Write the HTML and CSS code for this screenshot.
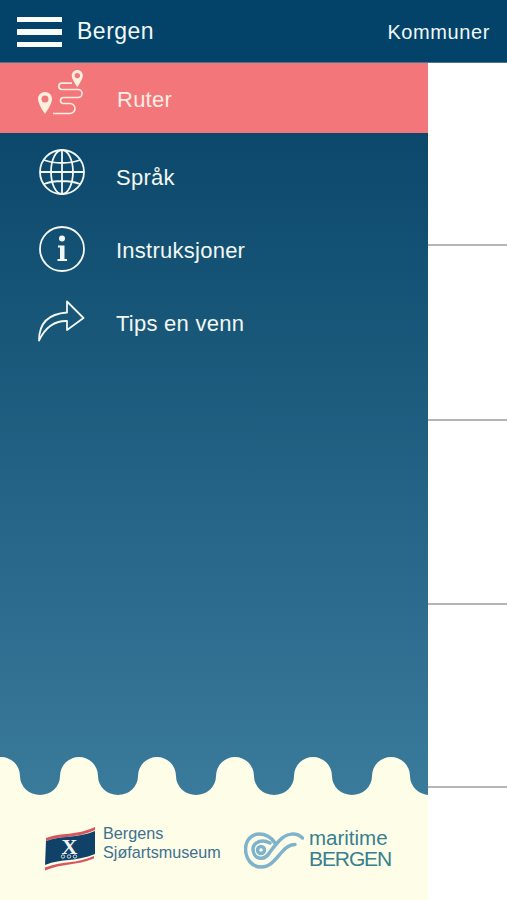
FILE: index.html
```html
<!DOCTYPE html>
<html lang="no">
<head>
<meta charset="utf-8">
<title>Bergen</title>
<link rel="stylesheet" href="styles.css">
</head>
<body>
<div class="app">
  <header class="topbar">
    <div class="burger"><span></span><span></span><span></span></div>
    <div class="title">Bergen</div>
    <div class="kommuner">Kommuner</div>
  </header>
  <div class="main">
    <aside class="drawer">
      <a class="active-row">
        <svg class="icon-route" viewBox="0 0 50 50" width="50" height="50">
          <path class="pin" fill-rule="evenodd" d="M9 24c-4 0-7 3-7 7C2 36 9 46 9 46s7-10 7-15C16 27 13 24 9 24zm0 3.500a3.500 3.500 0 1 1 0 7 3.500 3.500 0 0 1 0-7z"/>
          <path class="pin" fill-rule="evenodd" d="M41.300 2c-3.100 0-5.600 2.500-5.600 5.600 0 3.800 5.600 11.600 5.600 11.600s5.600-7.800 5.600-11.600c0-3.100-2.500-5.600-5.600-5.600zm0 2.900a2.700 2.700 0 1 1 0 5.400 2.700 2.700 0 0 1 0-5.400z"/>
          <path class="route" d="M17 45.500H34a5 5 0 0 0 0-10H27.500a3 3 0 0 1 0-6H42a4 4 0 0 0 0-8H26a3.200 3.200 0 0 1 0-6.400H36"/>
        </svg>
        <span class="label">Ruter</span>
      </a>
      <div class="drawer-body">
        <nav class="nav">
          <a class="row">
            <svg class="icon icon-globe" viewBox="0 0 48 48" width="48" height="48">
              <g class="line">
                <circle cx="24" cy="24" r="22"/>
                <ellipse cx="24" cy="24" rx="11" ry="22"/>
                <path d="M24 2V46M2 24H46M6 12C16 16 32 16 42 12M6 36C16 32 32 32 42 36"/>
              </g>
            </svg>
            <span class="label">Språk</span>
          </a>
          <a class="row">
            <svg class="icon icon-info" viewBox="0 0 48 48" width="48" height="48">
              <circle class="line" cx="24" cy="24" r="22"/>
              <circle class="solid" cx="24" cy="13.500" r="3"/>
              <path class="solid" d="M20 20.500h6.500V34H29V36H19.500v-2h2.500V22.500H20z"/>
            </svg>
            <span class="label">Instruksjoner</span>
          </a>
          <a class="row">
            <svg class="icon icon-share" viewBox="0 0 48 42" width="48" height="42">
              <path class="line" d="M1 40.500C1 27 7 14 29 12.500V1.500L45.500 18 29 30V21C15 20.500 7 28 1 40.500Z"/>
            </svg>
            <span class="label">Tips en venn</span>
          </a>
        </nav>
        <svg class="wave" viewBox="0 0 428 38" width="428" height="38" preserveAspectRatio="none">
          <path d="M-18 38V19A19 19 0 0 1 20 19A20 19 0 0 0 60 19A19 19 0 0 1 98 19A20 19 0 0 0 138 19A19 19 0 0 1 176 19A20 19 0 0 0 216 19A19 19 0 0 1 254 19A20 19 0 0 0 294 19A19 19 0 0 1 332 19A20 19 0 0 0 372 19A19 19 0 0 1 410 19A20 19 0 0 0 450 19V38Z"/>
        </svg>
      </div>
      <footer class="footer">
        <div class="logo-museum">
          <svg class="flag" viewBox="0 0 52 46" width="52" height="46">
            <path class="flag-red" d="M2 11C18 5 32 9 51 0V3C32 12 18 8 2 14Z"/>
            <path class="flag-navy" d="M2 14C18 8 32 12 51 4V27C32 35 18 31 1 38Z"/>
            <path class="flag-red" d="M1 40.500C18 34 32 37 50 29V31.500C32 39 18 36 1 43.500Z"/>
            <text class="flag-x" x="25.500" y="27">X</text>
            <g class="flag-rings">
              <circle cx="19" cy="29.500" r="1.700"/>
              <circle cx="25" cy="29.500" r="1.700"/>
              <circle cx="31" cy="29.500" r="1.700"/>
            </g>
          </svg>
          <div class="museum-name"><span>Bergens</span><span>Sjøfartsmuseum</span></div>
        </div>
        <div class="logo-maritime">
          <svg class="swirl" viewBox="0 0 60 37" width="60" height="37">
            <g class="swirl-line">
              <path d="M31 11C27 5 21 2 15 2C7 2 1.500 9 1.500 17C1.500 27 8 35 17 35C26 35 32 27 37 21C41 16 45 12.500 51 12.500"/>
              <path d="M58.500 6C52 0 43 1 36 8C32 12 29 16 26 20C23 25 19 27 15 26C11 25 9 21 9 17C9 12 14 9 19 9C22 9 24 10 26 11"/>
              <circle cx="17" cy="18" r="3.500"/>
            </g>
          </svg>
          <div class="maritime-name"><span class="m1">maritime</span><span class="m2">BERGEN</span></div>
        </div>
      </footer>
    </aside>
    <div class="list">
      <div class="cell c1"></div>
      <div class="cell c2"></div>
      <div class="cell c3"></div>
      <div class="cell c4"></div>
    </div>
  </div>
</div>
</body>
</html>
```
FILE: styles.css
```css
html, body { margin: 0; padding: 0; background: #fff; }
body { font-family: "Liberation Sans", Arial, sans-serif; }
.app { width: 507px; height: 900px; display: flex; flex-direction: column; overflow: hidden; }
.topbar { height: 62px; background: #03436a; display: flex; align-items: center; padding: 0 17px; border-bottom: 1px solid #4a7690; color: #f2f8f6; }
.burger { width: 45px; display: flex; flex-direction: column; gap: 7px; margin-top: 2px; }
.burger span { display: block; height: 5.500px; background: #fbfdfb; }
.title { margin-left: 15px; font-size: 23px; letter-spacing: .5px; flex: 1; margin-top: 1px; }
.kommuner { font-size: 20px; letter-spacing: .6px; margin-top: 2px; }
.main { flex: 1; display: flex; min-height: 0; }
.drawer { width: 428px; display: flex; flex-direction: column; }
.active-row { height: 70px; background: #f3767a; display: flex; align-items: center; padding-left: 36px; color: #fdeee2; }
.active-row .label { margin-left: 31px; margin-top: 4px; }
.icon-route { margin-top: -10px; flex: none; }
.pin { fill: #fdf0dc; }
.route { fill: none; stroke: #fdeee2; stroke-width: 1.600; }
.label { font-size: 22px; letter-spacing: .25px; }
.drawer-body { flex: 1; display: flex; flex-direction: column; background: linear-gradient(#0b486b, #3a7a9b); }
.nav { flex: 1; padding-top: 8px; color: #f2f7f2; }
.row { height: 73px; display: flex; align-items: center; padding-left: 38px; }
.row .label { margin-left: 30px; }
.icon { flex: none; }
.icon-globe { margin-top: -11px; }
.icon-info { margin-top: -4px; }
.icon-share { margin-top: -6px; }
.line, .line * { fill: none; stroke: #f3f7f2; stroke-width: 1.800; stroke-linejoin: round; }
.solid { fill: #f3f7f2; }
.wave { display: block; flex: none; }
.wave path { fill: #fdfde8; }
.footer { height: 105px; background: #fdfde8; display: flex; align-items: flex-start; padding: 31px 0 0 44px; box-sizing: border-box; }
.logo-museum { display: flex; width: 200px; }
.flag { flex: none; margin-top: 1px; }
.flag-red { fill: #d9555c; }
.flag-navy { fill: #0f4169; }
.flag-x { font-family: "Liberation Serif", serif; font-size: 22px; font-weight: bold; fill: #f5f5ee; text-anchor: middle; }
.flag-rings circle { fill: none; stroke: #e8ece6; stroke-width: .9; }
.museum-name { display: flex; flex-direction: column; margin-left: 7px; margin-top: -2px; font-size: 16.200px; line-height: 19px; color: #3f7190; white-space: nowrap; }
.logo-maritime { display: flex; }
.swirl { flex: none; margin-top: 6px; }
.swirl-line * { fill: none; stroke: #7fb2cb; stroke-width: 3.500; stroke-linecap: round; }
.maritime-name { display: flex; flex-direction: column; margin-left: 5px; color: #37808f; white-space: nowrap; gap: 0; }
.m1 { font-size: 20.500px; line-height: 19px; margin-top: 2px; }
.m2 { font-size: 21px; line-height: 21px; letter-spacing: -1.100px; margin-top: 1px; }
.list { flex: 1; display: flex; flex-direction: column; }
.cell { border-bottom: 2px solid #b5b5b5; flex: none; }
.c1 { height: 181px; }
.c2 { height: 173px; }
.c3 { height: 182px; }
.c4 { height: 181px; }
```
